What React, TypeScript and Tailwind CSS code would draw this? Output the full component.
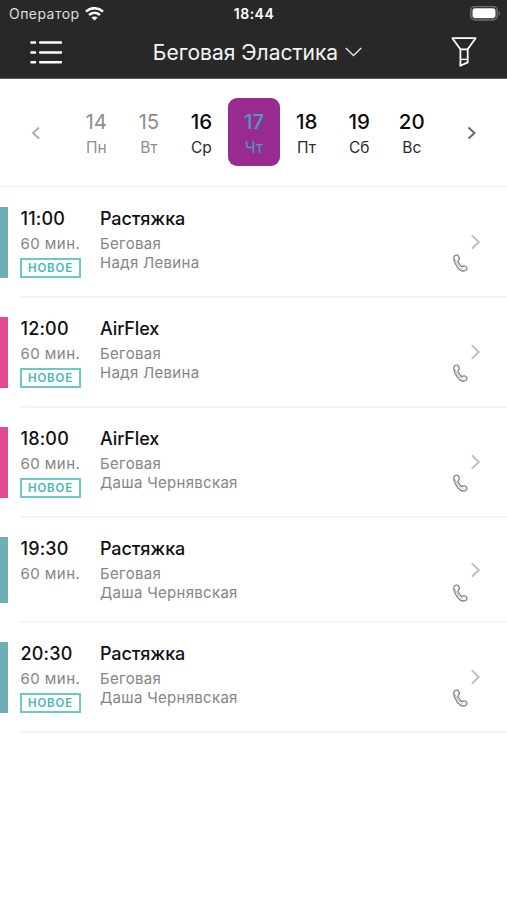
import clsx from "clsx";

const days = [
  { date: 14, name: "Пн", past: true },
  { date: 15, name: "Вт", past: true },
  { date: 16, name: "Ср" },
  { date: 17, name: "Чт", selected: true },
  { date: 18, name: "Пт" },
  { date: 19, name: "Сб" },
  { date: 20, name: "Вс" },
];

const lessons = [
  { time: "11:00", title: "Растяжка", trainer: "Надя Левина", isNew: true, bar: "bg-[#6fadb9]" },
  { time: "12:00", title: "AirFlex", trainer: "Надя Левина", isNew: true, bar: "bg-[#e2498f]" },
  { time: "18:00", title: "AirFlex", trainer: "Даша Чернявская", isNew: true, bar: "bg-[#e2498f]" },
  { time: "19:30", title: "Растяжка", trainer: "Даша Чернявская", isNew: false, bar: "bg-[#6fadb9]" },
  { time: "20:30", title: "Растяжка", trainer: "Даша Чернявская", isNew: true, bar: "bg-[#6fadb9]" },
];

const WifiIcon = () => (
  <svg width="19" height="14" viewBox="0 0 19 14" fill="none" stroke="#fff" strokeWidth="2.5">
    <path d="M1 4.6C5.8 0.1 13.2 0.1 18 4.6" />
    <path d="M4.1 8C7.2 5.1 11.8 5.1 14.9 8" />
    <path d="M9.5 13.5L6.4 10.5C8.2 9 10.8 9 12.6 10.5Z" fill="#fff" stroke="none" />
  </svg>
);

const BatteryIcon = () => (
  <svg width="31" height="15" viewBox="0 0 31 15" fill="none">
    <rect x="0.8" y="0.5" width="26.4" height="13.4" rx="4.2" stroke="#6e6e6e" strokeWidth="1.5" />
    <rect x="2.5" y="2.2" width="23" height="10" rx="2.6" fill="#fff" />
    <path d="M28.6 4.9C30.6 5.7 30.6 8.7 28.6 9.5Z" fill="#6e6e6e" />
  </svg>
);

const MenuIcon = () => (
  <svg width="33" height="24" viewBox="0 0 33 24" stroke="#fff" strokeWidth="2.5" strokeLinecap="round">
    <path d="M2.4 1.6H6M11.2 1.6H32M2.4 11.4H6M11.2 11.4H32M2.4 21.2H6M11.2 21.2H32" />
  </svg>
);

const FilterIcon = () => (
  <svg width="26" height="31" viewBox="0 0 26 31" fill="none" stroke="#fff" strokeWidth="1.8" strokeLinejoin="round">
    <path d="M1.4 1.2H24.6L16.7 12.2V25.4L9.4 28.8V12.2Z" />
    <path d="M9.4 12.4H16.7" />
    <path d="M9.4 22.4H16.7" strokeWidth="1.4" />
  </svg>
);

const PhoneIcon = () => (
  <svg width="15" height="18" viewBox="0 0 15 18" fill="none" stroke="#838383" strokeWidth="1.3" strokeLinejoin="round">
    <path d="M2 1.6C3.4 0.5 5.2 1.2 5.9 2.7C6.5 4.1 6.4 5.4 5.4 6.2C4.9 6.7 4.8 7.2 5.2 8C6 9.7 6.9 10.8 8.2 12C8.8 12.5 9.4 12.5 10 12.2C11.2 11.6 12.6 12 13.5 13.2C14.4 14.5 14 15.9 12.6 16.5C9.6 17.8 6.1 15.6 3.9 12.3C1.6 8.8 -0.4 3.7 2 1.6Z" />
    <path d="M1.6 4.8C3 7.5 4.2 10.2 6.2 12.2C7.4 13.4 8.4 14 9.7 14.5" strokeWidth="0.6" />
  </svg>
);

const Header = () => {
  return (
    <header className="h-[79px] border-b border-[#5c5c5c] bg-[#282828] text-white">
      {/* Status bar */}
      <div className="grid h-[27px] grid-cols-3 items-center pl-[9px] pr-[6px] text-[14px]">
        <div className="flex items-center gap-[5px] tracking-[0.45px] text-[#dedede]">
          Оператор
          <WifiIcon />
        </div>
        <div className="pr-[2px] text-center font-semibold tracking-[0.5px]">18:44</div>
        <div className="flex justify-end">
          <BatteryIcon />
        </div>
      </div>

      {/* Navigation */}
      <div className="flex h-[51px] items-center justify-between pl-[29px] pr-[30px]">
        <MenuIcon />
        <button className="ml-[2px] flex items-center gap-[7px] text-[21px] leading-none text-[#f4f4f4]">
          Беговая Эластика
          <svg className="-mt-px" width="17" height="10" viewBox="0 0 17 10" fill="none" stroke="#e5e5e5" strokeWidth="1.4">
            <path d="M0.8 0.9L8.5 8.6L16.2 0.9" />
          </svg>
        </button>
        <FilterIcon />
      </div>
    </header>
  );
};

const Calendar = () => {
  return (
    <section className="flex h-[108px] items-center justify-between border-b border-[#f0f0f0] px-[31px]">
      <svg width="10" height="14" viewBox="0 0 10 14" fill="none" stroke="#acacac" strokeWidth="2">
        <path d="M8 1.5L2 7L8 12.5" />
      </svg>
      <div className="-mt-px ml-px flex">
        {days.map((day) => (
          <div
            key={day.date}
            className={clsx(
              "flex h-[68px] w-[52.6px] flex-col items-center rounded-[9px] pt-[11px]",
              day.selected && "bg-[#982b8f] text-[#4a9dbb]",
              day.past && "text-[#8e8e8e]",
              !day.selected && !day.past && "text-[#0c0c0c]"
            )}
          >
            <div className={clsx("text-[20.5px] leading-[26px]", !day.past && "font-medium")}>{day.date}</div>
            <div className={clsx("text-[15.5px] leading-[25px]", !day.selected && !day.past && "text-[#2a2a2a]")}>
              {day.name}
            </div>
          </div>
        ))}
      </div>
      <svg width="10" height="14" viewBox="0 0 10 14" fill="none" stroke="#6a6a6a" strokeWidth="2.2">
        <path d="M2.5 1.5L8.5 7L2.5 12.5" />
      </svg>
    </section>
  );
};

const Lesson = ({ lesson }: { lesson: (typeof lessons)[number] }) => {
  return (
    <li className="pt-5">
      <div className={clsx("flex", lesson.isNew ? "h-[71px]" : "h-[66px]")}>
        <div className={clsx("w-2 shrink-0", lesson.bar)} />
        <div className="ml-3 w-20 shrink-0 pt-px">
          <div className="pl-[0.5px] text-[18px] font-medium leading-[22px] tracking-[0.2px] text-[#111]">
            {lesson.time}
          </div>
          <div className="mt-1 pl-[0.5px] text-[15px] leading-5 tracking-[0.45px] text-[#858585]">60 мин.</div>
          {lesson.isNew && (
            <div className="mt-[4px] flex h-5 w-[61px] items-center justify-center border-2 border-[#6cc9c8] pt-[2px] text-[11.5px] font-semibold leading-none tracking-[0.8px] text-[#43b8b5]">
              НОВОЕ
            </div>
          )}
        </div>
        <div className="flex-1 pt-px">
          <div className="text-[18px] font-medium leading-[22px] tracking-[-0.1px] text-[#111]">{lesson.title}</div>
          <div className="mt-1 text-[15px] leading-5 tracking-[0.3px] text-[#858585]">Беговая</div>
          <div className="-mt-px text-[15px] leading-5 tracking-[0.3px] text-[#858585]">{lesson.trainer}</div>
        </div>
        <div className="flex items-start pr-[26px]">
          <div className="mt-[47px]">
            <PhoneIcon />
          </div>
          <svg
            className={clsx("ml-[2px]", lesson.isNew ? "mt-[27px]" : "mt-[25px]")}
            width="11"
            height="16"
            viewBox="0 0 11 16"
            fill="none"
            stroke="#c2c2c2"
            strokeWidth="2"
          >
            <path d="M1.8 1.2L8.8 8L1.8 14.8" />
          </svg>
        </div>
      </div>
      <div className="-mb-px ml-5 mt-[18px] h-[2px] bg-[#f4f4f4]" />
    </li>
  );
};

export default function App() {
  return (
    <div className="min-h-[900px] w-[507px] bg-white font-['Inter','Liberation_Sans',sans-serif]">
      <Header />
      <Calendar />
      <ul>
        {lessons.map((lesson) => (
          <Lesson key={lesson.time} lesson={lesson} />
        ))}
      </ul>
    </div>
  );
}
